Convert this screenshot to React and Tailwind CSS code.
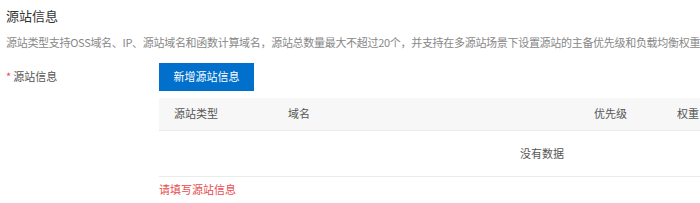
import React from 'react'

const columns = [
  { title: '源站类型', width: 'w-[114px]' },
  { title: '域名', width: 'w-[306px]' },
  { title: '优先级', width: 'w-[83px]' },
  { title: '权重', width: 'w-[263px]' },
]

export default function App() {
  return (
    <div
      className="w-[700px] h-[203px] overflow-hidden bg-white pl-[6px]"
      style={{ fontFamily: '"Noto Sans CJK SC", "Noto Sans", sans-serif' }}
    >
      {/* Section header */}
      <h3 className="pt-[8px] text-[13px] leading-[15px] text-[#333] whitespace-nowrap">源站信息</h3>
      <p className="mt-[13px] text-[11px] leading-[13px] tracking-[-0.3px] text-[#888] whitespace-nowrap">
        源站类型支持OSS域名、IP、源站域名和函数计算域名，源站总数量最大不超过20个，并支持在多源站场景下设置源站的主备优先级和负载均衡权重
      </p>

      {/* Form row */}
      <div className="flex mt-[13px]">
        <div className="w-[153px] shrink-0 flex items-start pt-[8px] text-[11px] leading-[13px] text-[#555]">
          <span className="text-[#e84c4c] mr-[2px]">*</span>
          <span>源站信息</span>
        </div>
        <div className="shrink-0">
          <button className="h-[28px] w-[95px] bg-[#0070cc] text-white text-[11px] leading-[13px]">
            新增源站信息
          </button>
          <div className="mt-[7px] w-[766px]">
            <div className="flex h-[33px] items-center bg-[#f7f7f7] border-b border-[#ebebeb]">
              {columns.map((col) => (
                <div key={col.title} className={`${col.width} shrink-0 pl-[15px] text-[11px] text-[#555]`}>
                  {col.title}
                </div>
              ))}
            </div>
            <div className="h-[46px] flex items-center justify-center border-b border-[#ebebeb] text-[11px] text-[#555]">
              没有数据
            </div>
          </div>
          <div className="mt-[6px] text-[11px] leading-[13px] text-[#e84c4c]">请填写源站信息</div>
        </div>
      </div>
    </div>
  )
}
